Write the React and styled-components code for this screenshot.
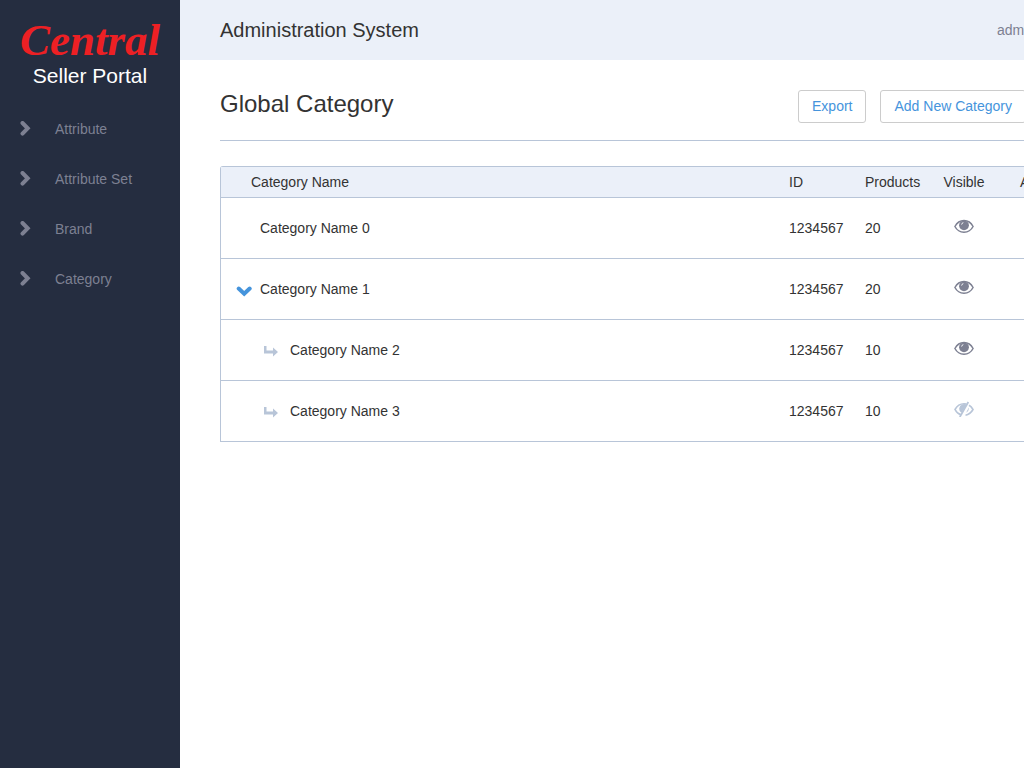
import React from "react";
import styled, { createGlobalStyle } from "styled-components";

const colors = {
  navy: "#252d40",
  muted: "#7d8092",
  pale: "#ebf0f9",
  line: "#b8c5d8",
  text: "#333333",
  blue: "#4594dc",
};

const GlobalStyle = createGlobalStyle`
  *, *::before, *::after { box-sizing: border-box; }
  body {
    margin: 0;
    background: #fff;
    color: ${colors.text};
    font: 14px/20px "Liberation Sans", Arial, sans-serif;
  }
`;

const Page = styled.div`
  display: flex;
  min-height: 100vh;
  overflow: hidden;
`;

const Sidebar = styled.aside`
  flex: 0 0 180px;
  background: ${colors.navy};
`;

const Brand = styled.a`
  display: flex;
  flex-direction: column;
  align-items: center;
  padding: 16px 0;
  text-decoration: none;
`;

const BrandName = styled.span`
  color: #ed2024;
  font: italic bold 45px/48px "Liberation Serif", serif;
`;

const BrandSub = styled.span`
  color: #fff;
  font-size: 21px;
  line-height: 24px;
`;

const NavList = styled.ul`
  list-style: none;
  margin: 0;
  padding: 0;
`;

const NavLink = styled.a`
  display: flex;
  align-items: center;
  gap: 24px;
  height: 50px;
  padding: 0 20px;
  color: ${colors.muted};
  text-decoration: none;
`;

const Main = styled.main`
  flex: 1 1 0;
  min-width: 940px;
`;

const TopBar = styled.header`
  display: flex;
  align-items: center;
  justify-content: space-between;
  height: 60px;
  padding: 0 40px;
  background: ${colors.pale};
`;

const SystemName = styled.div`
  font-size: 20px;
  line-height: 24px;
`;

const UserLink = styled.a`
  width: 83px;
  color: ${colors.muted};
  text-decoration: none;
`;

const Content = styled.section`
  padding: 30px 40px;
`;

const Heading = styled.div`
  display: flex;
  justify-content: space-between;
  height: 51px;
  margin-bottom: 25px;
  border-bottom: 1px solid ${colors.line};
`;

const Title = styled.h1`
  margin: 0;
  font-size: 24px;
  font-weight: 400;
  line-height: 28px;
`;

const Actions = styled.div`
  display: flex;
  align-items: flex-start;
  gap: 14px;
  padding-right: 54px;
`;

const Button = styled.button`
  height: 33px;
  padding: 0 13px 2px;
  border: 1px solid #cccccc;
  border-radius: 3px;
  background: #fff;
  color: ${colors.blue};
  font: inherit;
`;

const Table = styled.table`
  width: 100%;
  table-layout: fixed;
  border: 1px solid ${colors.line};
  border-bottom: 0;
  border-radius: 3px 3px 0 0;
  border-spacing: 0;
`;

const Col = styled.col`
  width: ${(p) => p.$width};
`;

const HeadCell = styled.th`
  height: 31px;
  padding: 0 ${(p) => (p.$center ? "0" : "10px")};
  padding-left: ${(p) => p.$indent};
  border-bottom: 1px solid ${colors.line};
  background: ${colors.pale};
  font-weight: 400;
  text-align: ${(p) => (p.$center ? "center" : "left")};
`;

const Cell = styled.td`
  height: 61px;
  padding: 0 10px;
  border-bottom: 1px solid ${colors.line};
  text-align: ${(p) => (p.$center ? "center" : "left")};
`;

const NameCell = styled.div`
  display: flex;
  align-items: center;
  padding-left: ${(p) => (p.$child ? "30px" : "0")};
`;

const Slot = styled.span`
  display: flex;
  flex: 0 0 29px;
  padding: 4px 0 0 ${(p) => (p.$child ? "3px" : "5px")};
`;

const IconButton = styled.button`
  display: inline-flex;
  padding: 0;
  border: 0;
  background: none;
  color: ${(p) => p.$color};
`;

const ArrowRight = () => (
  <svg width="11" height="16" viewBox="0 0 11 16" fill="none" stroke="currentColor" strokeWidth="4" aria-hidden="true">
    <path d="M2.500 2 L7.700 7.300 L2.500 12.600" strokeLinecap="round" />
  </svg>
);

const ArrowDown = () => (
  <svg width="16" height="11" viewBox="0 0 16 11" fill="none" stroke="currentColor" strokeWidth="4" strokeLinecap="round" aria-hidden="true">
    <path d="M2.700 2.500 L8.200 7.700 L13.700 2.500" />
  </svg>
);

const ChildArrow = () => (
  <svg width="14" height="12" viewBox="0 0 14 12" fill={colors.line} aria-hidden="true">
    <path d="M0 0h2.500v4.500h6.500V1.500L14 6 9 10.500V7.500H0z" />
  </svg>
);

const Eye = () => (
  <svg width="20" height="16" viewBox="0 0 20 16" aria-hidden="true">
    <path d="M.9 8.500C3.200 4.200 6.300 2.500 10 2.500s6.800 1.700 9.100 6c-2.300 4.300-5.400 5.700-9.100 5.700S3.200 12.800.9 8.500z" fill="none" stroke="currentColor" strokeWidth="1.500" />
    <circle cx="10" cy="7.300" r="4.900" fill="currentColor" />
    <path d="M7.600 6.500a2.400 2.400 0 0 1 1.700-1.900" stroke="#fff" strokeWidth="1" fill="none" />
  </svg>
);

const EyeOff = () => (
  <svg width="20" height="16" viewBox="0 0 20 16" aria-hidden="true">
    <path d="M7 13.800C4.500 13.100 2.500 11.500 1 8.500c2.200-4 5.300-5.800 9-5.800.9 0 1.700.1 2.500.3M15 4.300c1.600.9 2.900 2.300 4 4.200-1.800 3.300-4.200 5.100-7.500 5.700" fill="none" stroke="currentColor" strokeWidth="1.600" />
    <path d="M5.300 7a4.800 4.800 0 0 1 7.500-3L7.300 11.800a4.800 4.800 0 0 1-2-4.800zM14.800 6.500a5 5 0 0 1-2.700 5.200z" fill="currentColor" />
    <path d="M14.300 1 5.800 16" stroke="currentColor" strokeWidth="1.800" />
  </svg>
);

const menu = ["Attribute", "Attribute Set", "Brand", "Category"];

const categories = [
  { name: "Category Name 0", id: "1234567", products: 20, visible: true },
  { name: "Category Name 1", id: "1234567", products: 20, visible: true, open: true },
  { name: "Category Name 2", id: "1234567", products: 10, visible: true, child: true },
  { name: "Category Name 3", id: "1234567", products: 10, visible: false, child: true },
];

function CategoryRow({ item }) {
  return (
    <tr>
      <Cell>
        <NameCell $child={item.child}>
          <Slot $child={item.child}>
            {item.open && (
              <IconButton $color={colors.blue} aria-label="Collapse category">
                <ArrowDown />
              </IconButton>
            )}
            {item.child && <ChildArrow />}
          </Slot>
          {item.name}
        </NameCell>
      </Cell>
      <Cell>{item.id}</Cell>
      <Cell>{item.products}</Cell>
      <Cell $center>
        <IconButton $color={item.visible ? colors.muted : colors.line} aria-label="Toggle visibility">
          {item.visible ? <Eye /> : <EyeOff />}
        </IconButton>
      </Cell>
      <Cell />
    </tr>
  );
}

export default function App() {
  return (
    <>
      <GlobalStyle />
      <Page>
        <Sidebar>
          <Brand href="#home">
            <BrandName>Central</BrandName>
            <BrandSub>Seller Portal</BrandSub>
          </Brand>
          <nav>
            <NavList>
              {menu.map((label) => (
                <li key={label}>
                  <NavLink href={`#${label}`}>
                    <ArrowRight />
                    {label}
                  </NavLink>
                </li>
              ))}
            </NavList>
          </nav>
        </Sidebar>
        <Main>
          <TopBar>
            <SystemName>Administration System</SystemName>
            <UserLink href="#account">admin</UserLink>
          </TopBar>
          <Content>
            <Heading>
              <Title>Global Category</Title>
              <Actions>
                <Button>Export</Button>
                <Button>Add New Category</Button>
              </Actions>
            </Heading>
            <Table>
              <colgroup>
                <Col $width="auto" />
                <Col $width="76px" />
                <Col $width="78px" />
                <Col $width="62px" />
                <Col $width="84px" />
              </colgroup>
              <thead>
                <tr>
                  <HeadCell $indent="30px">Category Name</HeadCell>
                  <HeadCell>ID</HeadCell>
                  <HeadCell>Products</HeadCell>
                  <HeadCell $center>Visible</HeadCell>
                  <HeadCell $indent="25px">Action</HeadCell>
                </tr>
              </thead>
              <tbody>
                {categories.map((item) => (
                  <CategoryRow key={item.name} item={item} />
                ))}
              </tbody>
            </Table>
          </Content>
        </Main>
      </Page>
    </>
  );
}
